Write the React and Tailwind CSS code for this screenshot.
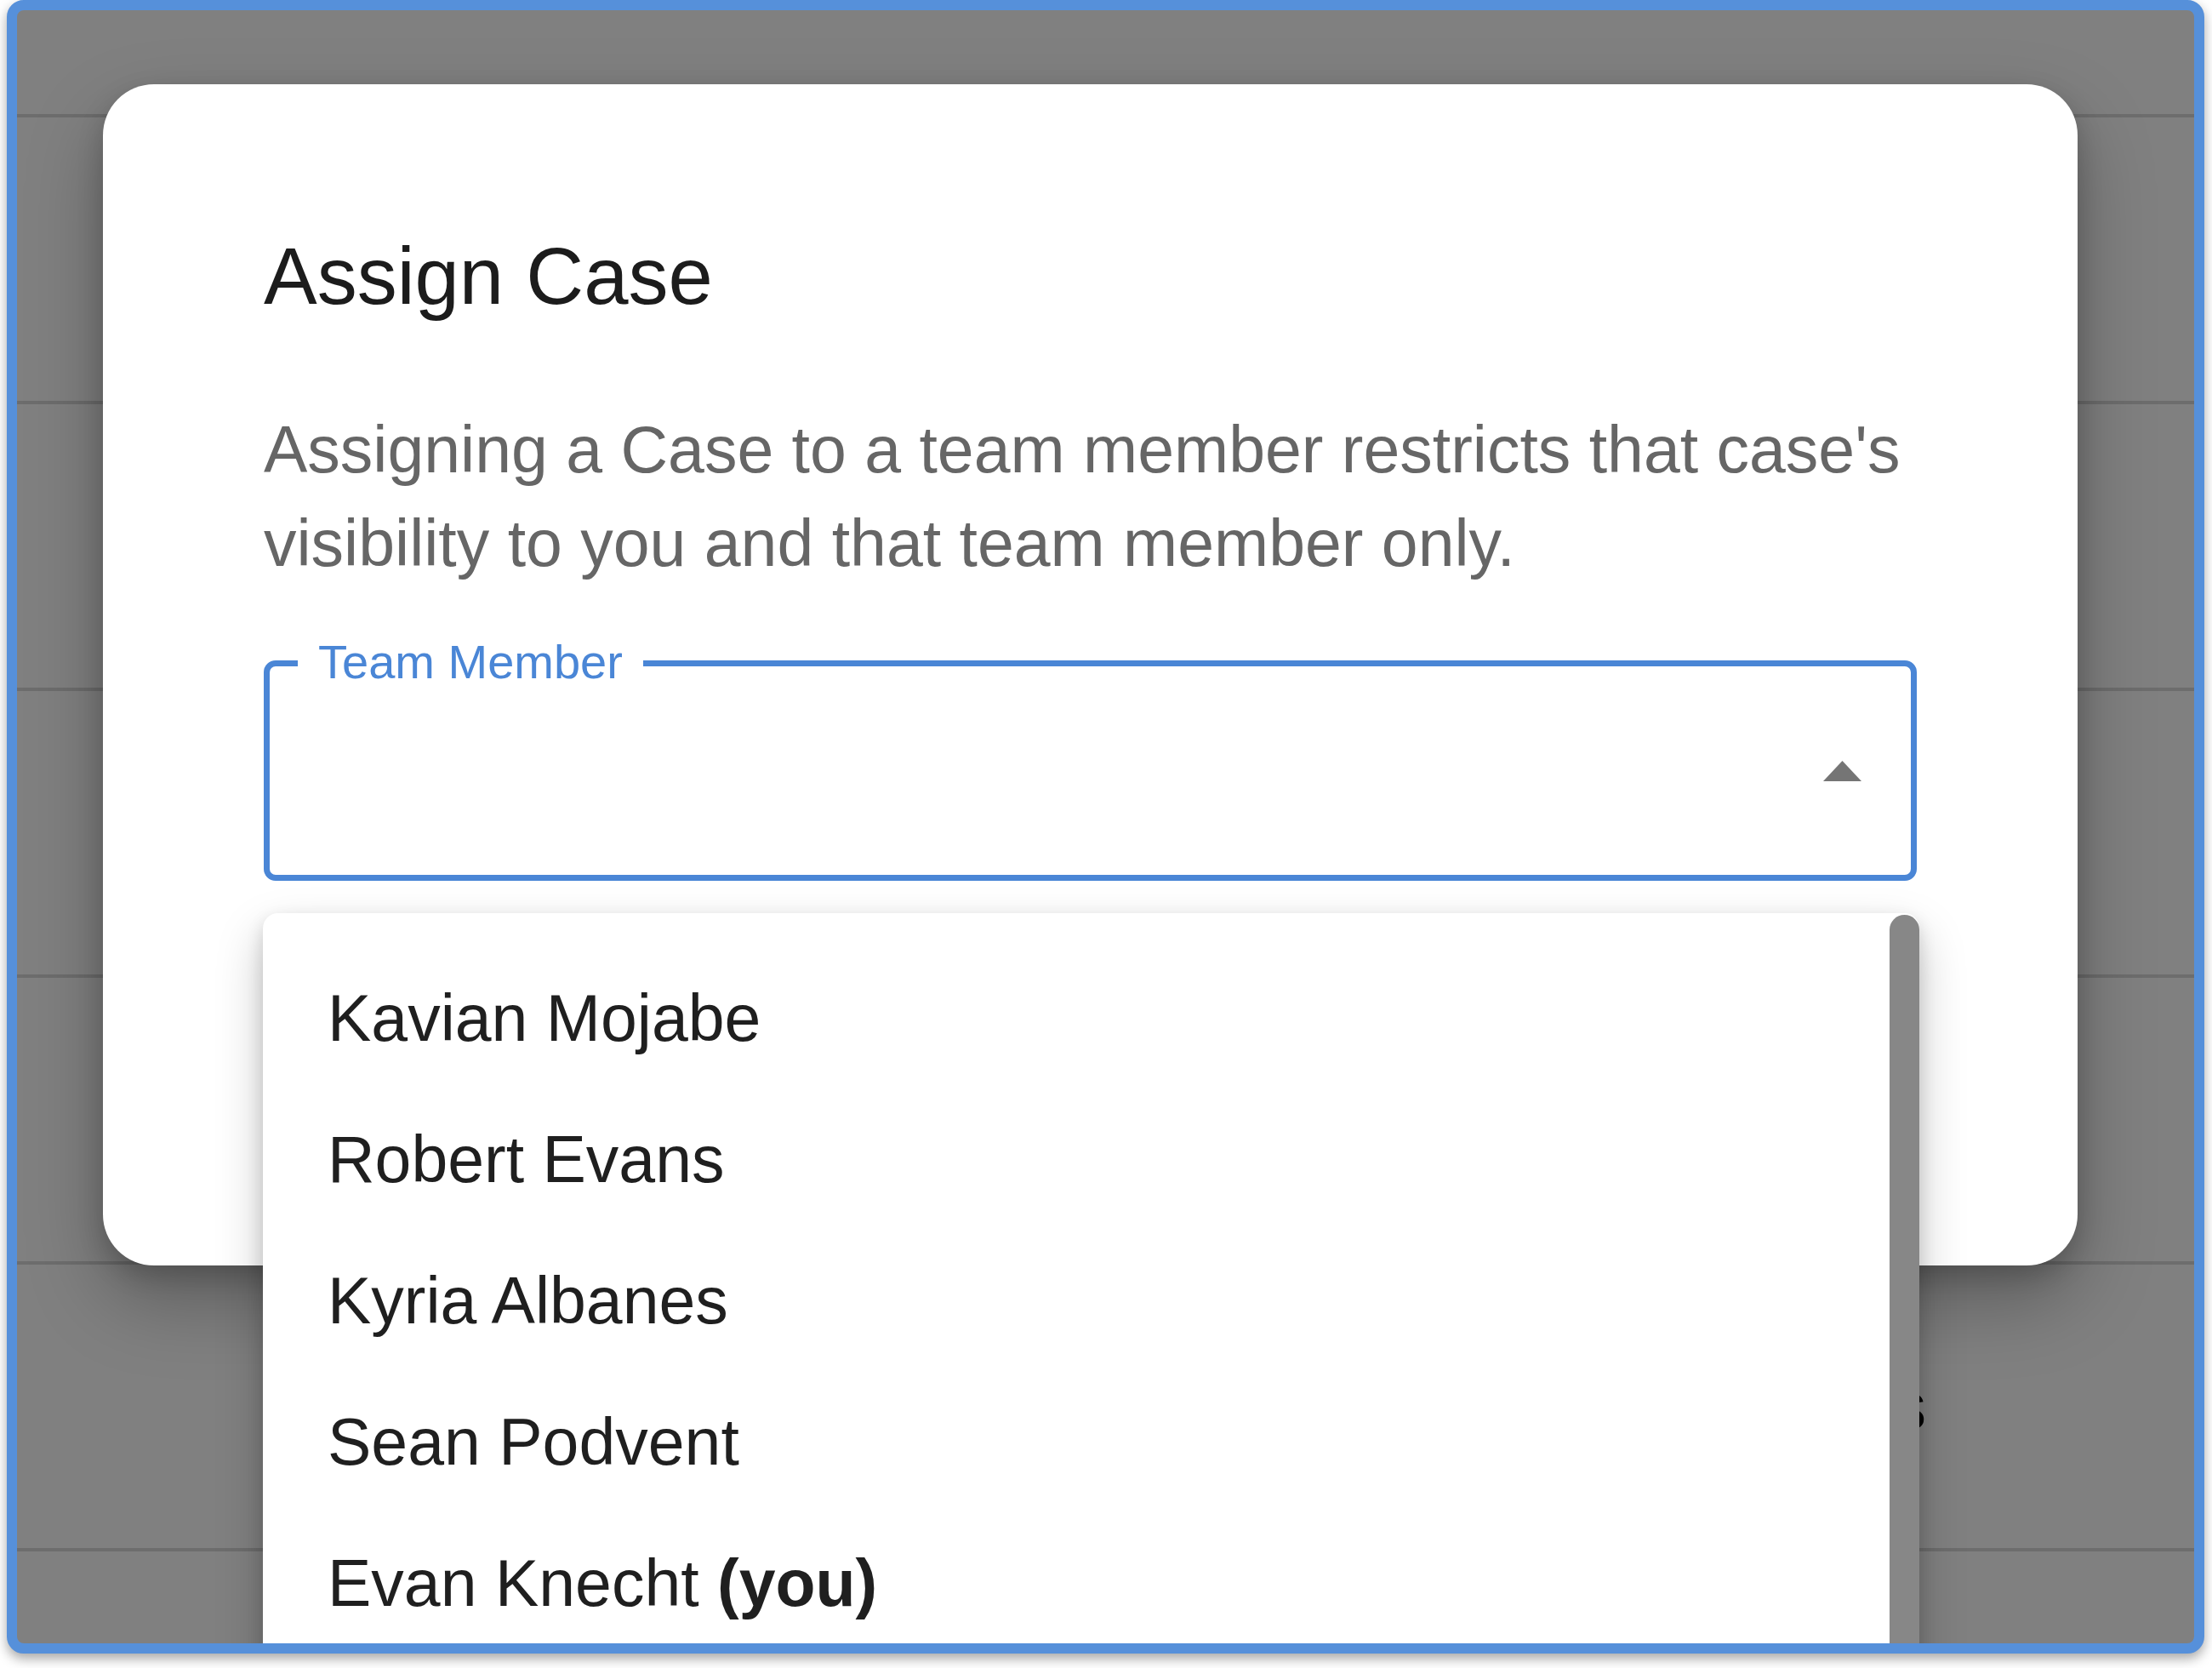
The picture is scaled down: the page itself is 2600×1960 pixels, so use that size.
export default function App() {
  const names = ["Kavian Mojabe", "Robert Evans", "Kyria Albanes", "Sean Podvent"];
  return (
    <div className="w-[2600px] h-[1960px] bg-white overflow-hidden pl-[8px] font-['Liberation_Sans',Arial,sans-serif]">
      <div className="relative w-[2583px] h-[1943px] border-[12px] border-[#5690da] rounded-[20px] overflow-hidden bg-[#808080] shadow-[0_6px_14px_rgba(0,0,0,0.35)]">
        {/* background table rows (under overlay) */}
        <div className="flex flex-col">
          <div className="h-[126px] shrink-0 border-b-4 border-[#6d6d6d]" />
          <div className="h-[337px] shrink-0 border-b-4 border-[#6d6d6d]" />
          <div className="h-[337px] shrink-0 border-b-4 border-[#6d6d6d]" />
          <div className="h-[337px] shrink-0 border-b-4 border-[#6d6d6d]" />
          <div className="h-[337px] shrink-0 border-b-4 border-[#6d6d6d]" />
          <div className="h-[337px] shrink-0 border-b-4 border-[#6d6d6d] flex items-center justify-end pr-[315px]">
            <span className="text-[77px] leading-none text-black">s</span>
          </div>
          <div className="h-[337px] shrink-0" />
        </div>

        {/* dialog */}
        <div className="absolute left-[101px] top-[87px] w-[2321px] h-[1388px] bg-white rounded-[60px] px-[189px] pt-[179px] shadow-[0_40px_90px_rgba(0,0,0,0.28),0_12px_30px_rgba(0,0,0,0.18)]">
          <h2 className="text-[94px] leading-[94px] text-[#1c1c1c] font-normal">Assign Case</h2>
          <p className="mt-[101px] text-[77px] leading-[110px] text-[#666666]">
            Assigning a Case to a team member restricts that case's visibility to you and that team member only.
          </p>
          <div className="relative mt-[83px] h-[259px] border-[7px] border-[#4a86d6] rounded-[14px] flex items-center justify-end pr-[58px]">
            <span className="absolute -top-[33px] left-[33px] px-[24px] bg-white text-[56px] leading-[56px] text-[#4a86d6]">Team Member</span>
            <svg width="45" height="24" viewBox="0 0 45 24">
              <polygon points="0,24 22.5,0 45,24" fill="#757575" />
            </svg>
          </div>
        </div>

        {/* dropdown menu */}
        <div className="absolute left-[289px] top-[1061px] w-[1947px] h-[1000px] bg-white rounded-[18px] flex shadow-[0_25px_55px_rgba(0,0,0,0.22),0_8px_20px_rgba(0,0,0,0.14)]">
          <ul className="flex-1 pt-[40px]">
            {names.map((n) => (
              <li key={n} className="pl-[76px] py-[27px] text-[77px] leading-[112px] text-[#1f1f1f]">{n}</li>
            ))}
            <li className="pl-[76px] py-[27px] text-[77px] leading-[112px] text-[#1f1f1f]">
              Evan Knecht <span className="font-bold">(you)</span>
            </li>
          </ul>
          <div className="w-[35px] shrink-0 pt-[2px]">
            <div className="h-full bg-[#878787] rounded-t-full" />
          </div>
        </div>
      </div>
    </div>
  );
}
